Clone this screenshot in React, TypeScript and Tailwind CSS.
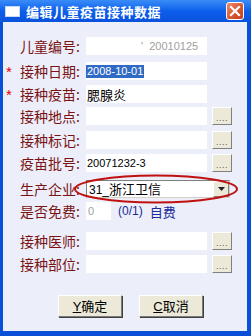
import React from "react";

const CJK = "font-['Noto_Sans_CJK_SC','Noto_Sans',sans-serif]";
const LAT = "font-['Liberation_Sans','Noto_Sans_CJK_SC',sans-serif]";

function DotBtn() {
  return (
    <div className="ml-[5px] w-[20px] h-[18px] bg-[#ECE9D8] border border-t-white border-l-white border-r-[#808080] border-b-[#808080] flex items-end justify-center pb-[2px]">
      <span className={`text-[9px] leading-[8px] tracking-[0.5px] text-[#555] ${LAT}`}>....</span>
    </div>
  );
}

function Label({ text, star }: { text: string; star?: boolean }) {
  return (
    <div className="flex items-center w-[83px] shrink-0">
      <span className={`w-[17px] pl-[3px] text-[#E00000] text-[15px] leading-none ${LAT}`}>{star ? "*" : ""}</span>
      <span className={`text-[14px] leading-none text-[#7A1414] whitespace-nowrap ${CJK}`}>{text}:</span>
    </div>
  );
}

function Row({ mt, label, star, children, btn }: { mt: string; label: string; star?: boolean; children?: React.ReactNode; btn?: boolean }) {
  return (
    <div className={`flex items-center h-[18px] ${mt}`}>
      <Label text={label} star={star} />
      <div className="w-[121px] h-[18px] bg-white flex items-center overflow-hidden">{children}</div>
      {btn && <DotBtn />}
    </div>
  );
}

function XpButton({ hot, text }: { hot: string; text: string }) {
  return (
    <div className="w-[64px] h-[22px] bg-[#ECE9D8] border border-t-white border-l-white border-r-[#7A7A7A] border-b-[#7A7A7A] shadow-[1px_1px_0_#404040] flex items-center justify-center">
      <span className={`text-[13px] leading-none text-black ${CJK}`}>
        <span className={`underline ${LAT}`}>{hot}</span>
        {text}
      </span>
    </div>
  );
}

export default function App() {
  return (
    <div className="w-[251px] h-[336px] flex flex-col bg-[#0A4FD8] overflow-hidden select-none">
      <div className="h-[22px] shrink-0 flex items-center relative bg-gradient-to-b from-[#3A8CF7] via-[#0C5EEC] to-[#0A52DC]">
        <div className="ml-[5px] w-[15px] h-[11px] bg-white border border-[#C8D8F8]" />
        <span className={`ml-[6px] text-white text-[13px] font-bold leading-none tracking-[0.5px] ${CJK}`}>编辑儿童疫苗接种数据</span>
        <div className="absolute left-[226px] top-[2px] w-[18px] h-[18px] rounded-[3px] border border-white bg-gradient-to-br from-[#EE8A68] via-[#DA5A35] to-[#C13E1C] flex items-center justify-center">
          <svg width="12" height="12" viewBox="0 0 12 12">
            <path d="M2 2 L10 10 M10 2 L2 10" stroke="white" strokeWidth="2.2" strokeLinecap="square" />
          </svg>
        </div>
      </div>
      <div className="flex-1 ml-[3px] mr-[4px] mb-[5px] bg-[#ECEEF9] relative flex flex-col">
        <Row mt="mt-[15px]" label="儿童编号">
          <span className={`ml-[55px] text-[11px] text-[#A0A0A0] whitespace-pre ${LAT}`}>'  20010125</span>
        </Row>
        <Row mt="mt-[7px]" label="接种日期" star>
          <span className={`bg-[#316AC5] text-white text-[11px] leading-[13px] px-[1px] ${LAT}`}>2008-10-01</span>
        </Row>
        <Row mt="mt-[5px]" label="接种疫苗" star>
          <span className={`ml-[1px] text-[13px] leading-none text-black ${CJK}`}>腮腺炎</span>
        </Row>
        <Row mt="mt-[4px]" label="接种地点" btn />
        <Row mt="mt-[6px]" label="接种标记" btn />
        <Row mt="mt-[5px]" label="疫苗批号" btn>
          <span className={`ml-[1px] text-[11px] text-black ${LAT}`}>20071232-3</span>
        </Row>
        <div className="flex items-center h-[18px] mt-[8px]">
          <Label text="生产企业" />
          <div className="w-[144px] h-[18px] bg-white border border-t-[#7F7F7F] border-l-[#7F7F7F] border-r-[#D4D0C8] border-b-[#D4D0C8] flex items-center">
            <span className={`ml-[2px] flex-1 text-[13px] leading-[16px] text-black ${CJK}`}>
              <span className={`text-[12px] ${LAT}`}>31_</span>浙江卫信
            </span>
            <div className="w-[16px] h-[16px] bg-[#ECE9D8] border border-t-white border-l-white border-r-[#808080] border-b-[#808080] flex items-center justify-center">
              <svg width="7" height="4" viewBox="0 0 7 4"><path d="M0 0 L7 0 L3.5 4 Z" fill="#222" /></svg>
            </div>
          </div>
        </div>
        <div className="flex items-center h-[18px] mt-[4px]">
          <Label text="是否免费" />
          <div className="w-[25px] h-[18px] bg-white flex items-center">
            <span className={`ml-[2px] text-[11px] text-[#A0A0A0] ${LAT}`}>0</span>
          </div>
          <span className={`ml-[7px] text-[12px] text-[#1A2A9A] ${LAT}`}>(0/1)</span>
          <span className={`ml-[7px] text-[13px] leading-none text-[#1A2A9A] ${CJK}`}>自费</span>
        </div>
        <Row mt="mt-[12px]" label="接种医师" btn />
        <Row mt="mt-[5px]" label="接种部位" btn />
        <div className="flex mt-[22px] ml-[55px] gap-[17px]">
          <XpButton hot="Y" text="确定" />
          <XpButton hot="C" text="取消" />
        </div>
        <svg className="absolute left-[68px] top-[151px] pointer-events-none" width="170" height="34" viewBox="0 0 170 34">
          <ellipse cx="85" cy="16" rx="81" ry="13.5" fill="none" stroke="#C01010" strokeWidth="2" />
        </svg>
      </div>
    </div>
  );
}
